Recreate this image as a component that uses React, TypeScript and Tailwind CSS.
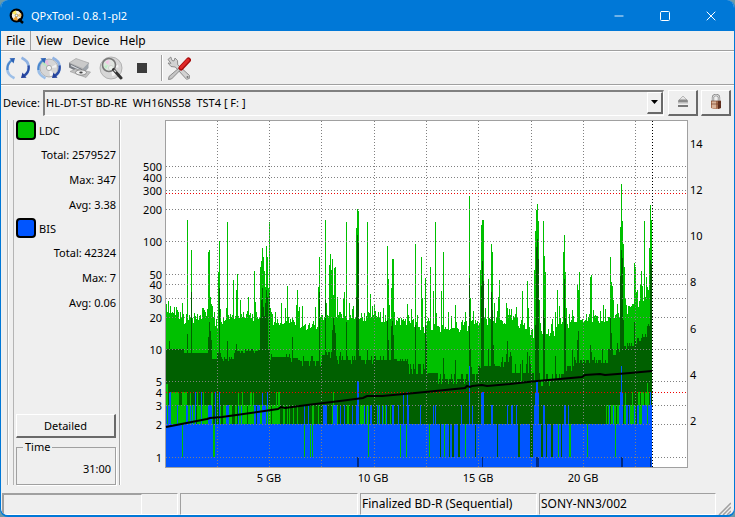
import React, { useState } from 'react';
import { Minus, Square, X } from 'lucide-react';

type Run = [x: number, width: number, top: number, bottom: number];
type Point = [x: number, y: number];

const PLOT = { left: 166, right: 687, top: 121, bottom: 467 };
const END_X = 652;

const LEFT_TICKS: [string, number][] = [
  ['500', 166], ['400', 177], ['300', 190], ['200', 209], ['100', 241], ['50', 274], ['40', 284],
  ['30', 298], ['20', 317], ['10', 349], ['5', 381], ['4', 392], ['3', 405], ['2', 424], ['1', 457],
];
const RIGHT_TICKS: [string, number][] = [['14', 144], ['12', 190], ['10', 236], ['8', 282], ['6', 329], ['4', 375], ['2', 421]];
const BOTTOM_TICKS: [string, number][] = [['5 GB', 269], ['10 GB', 373], ['15 GB', 478], ['20 GB', 583]];
const GRID_X = [217, 269, 321, 374, 426, 478, 531, 583, 635];
const GRID_Y = [166, 177, 190, 209, 241, 274, 284, 298, 317, 349, 381, 405, 424, 457];
const LIMIT_Y = [193, 392];

// single pixel LDC maximum spikes
const MAX_PEAKS: Point[] = [
  [168, 301], [170, 306], [174, 308], [177, 310], [187, 220], [191, 250], [202, 308], [208, 252], [209, 250], [210, 297],
  [211, 304], [218, 272], [219, 241], [227, 222], [233, 280], [236, 290], [237, 274], [240, 300], [248, 297], [254, 271],
  [255, 310], [260, 267], [261, 261], [262, 248], [263, 257], [264, 271], [265, 287], [266, 246], [267, 257], [268, 288],
  [269, 222], [281, 303], [287, 286], [296, 305], [297, 290], [318, 287], [319, 257], [325, 220], [329, 265], [330, 254],
  [331, 270], [332, 259], [333, 295], [334, 268], [335, 267], [344, 292], [346, 222], [352, 309], [356, 228], [357, 209],
  [358, 211], [367, 222], [370, 294], [375, 311], [383, 308], [387, 246], [388, 279], [389, 305], [391, 288], [392, 259],
  [393, 259], [394, 312], [407, 311], [411, 309], [415, 244], [421, 257], [422, 298], [425, 278], [430, 267], [433, 291],
  [435, 222], [441, 291], [443, 252], [448, 312], [455, 305], [462, 320], [469, 196], [470, 298], [473, 311], [480, 270],
  [481, 225], [482, 220], [483, 220], [488, 279], [491, 244], [492, 252], [498, 297], [499, 280], [506, 303], [507, 308],
  [511, 309], [522, 291], [527, 281], [528, 308], [534, 270], [535, 231], [536, 210], [537, 204], [538, 221], [539, 300],
  [543, 221], [544, 256], [545, 272], [555, 312], [557, 290], [563, 252], [564, 235], [565, 272], [566, 308], [572, 310],
  [577, 284], [578, 290], [579, 272], [590, 277], [591, 275], [600, 311], [605, 309], [610, 257], [611, 282], [612, 286],
  [613, 300], [620, 227], [621, 184], [622, 221], [623, 244], [624, 267], [625, 298], [634, 263], [635, 267], [636, 292],
  [637, 290], [640, 285], [641, 271], [642, 286], [644, 221], [646, 277], [647, 287], [648, 290], [649, 248], [650, 205],
  [651, 220],
];
const AVG_PEAKS: Point[] = [
  [169, 341], [187, 334], [191, 292], [208, 337], [209, 322], [210, 331], [211, 340], [219, 288], [227, 341], [236, 344],
  [260, 318], [261, 300], [262, 288], [263, 307], [264, 316], [265, 303], [266, 290], [267, 297], [269, 292], [292, 337],
  [319, 292], [325, 300], [332, 330], [333, 318], [334, 325], [335, 333], [340, 352], [346, 322], [356, 297], [357, 235],
  [358, 243], [367, 349], [387, 320], [388, 340], [391, 326], [392, 321], [393, 335], [415, 325], [425, 325], [426, 340],
  [443, 358], [455, 360], [469, 278], [470, 349], [481, 286], [482, 261], [483, 281], [488, 349], [491, 292], [492, 310],
  [493, 345], [506, 354], [507, 341], [510, 352], [511, 356], [522, 360], [527, 352], [529, 356], [535, 325], [536, 247],
  [537, 239], [538, 259], [543, 310], [544, 318], [555, 356], [564, 279], [565, 318], [572, 350], [577, 340], [578, 331],
  [590, 345], [591, 352], [602, 349], [610, 317], [611, 333], [617, 343], [620, 276], [621, 250], [622, 258], [623, 320],
  [634, 322], [650, 260], [651, 264],
];

// [x from, typical top]
const MAX_BASE: Point[] = [
  [166, 314], [190, 319], [208, 312], [216, 324], [230, 317], [258, 315], [272, 322], [290, 321], [312, 328], [322, 318],
  [336, 315], [356, 317], [376, 315], [396, 321], [408, 319], [422, 330], [428, 323], [446, 332], [466, 325], [480, 322],
  [495, 322], [510, 319], [524, 325], [531, 334], [540, 328], [551, 334], [562, 320], [570, 325], [580, 318], [604, 320],
  [622, 310], [634, 309], [642, 300], [652, 293],
];
// [x from, width, top, jitter]
const AVG_BASE: Run[] = [
  [166, 18, 349, 0], [184, 28, 353, 0], [212, 5, 359, 0], [217, 4, 353, 0], [221, 13, 359, 2], [234, 24, 351, 2],
  [258, 12, 350, 0], [270, 20, 357, 3], [290, 10, 360, 2], [300, 22, 361, 5], [322, 12, 355, 3], [334, 60, 360, 4],
  [394, 14, 361, 2], [408, 20, 369, 5], [428, 10, 373, 0], [438, 28, 379, 5], [466, 12, 374, 7], [478, 22, 366, 2],
  [500, 12, 362, 5], [512, 28, 373, 9], [540, 15, 380, 6], [555, 9, 374, 5], [564, 10, 366, 5], [574, 10, 360, 3],
  [584, 24, 360, 3], [608, 12, 352, 3], [620, 14, 346, 3], [634, 8, 341, 3], [642, 5, 334, 3], [647, 5, 326, 2],
];

const GREEN: Run[] = [
  [166, 2, 384, 424], [168, 45, 405, 424], [171, 8, 392, 424], [182, 5, 392, 424], [190, 1, 392, 424], [197, 1, 392, 424],
  [203, 1, 392, 424], [211, 2, 392, 424], [217, 1, 392, 424], [220, 1, 405, 424], [223, 3, 405, 424], [228, 4, 405, 424],
  [235, 2, 405, 424], [238, 33, 405, 424], [238, 1, 392, 424], [242, 1, 392, 424], [250, 2, 392, 424], [253, 1, 392, 424],
  [272, 7, 405, 424], [276, 1, 392, 424], [278, 2, 392, 424], [283, 2, 405, 424], [287, 1, 405, 424], [289, 1, 405, 424],
  [293, 1, 405, 424], [297, 1, 405, 424], [304, 1, 405, 424], [312, 2, 405, 424], [318, 1, 405, 424], [332, 2, 405, 424],
  [333, 1, 392, 424], [337, 1, 405, 424], [347, 2, 405, 424], [360, 4, 405, 424], [366, 3, 405, 424], [378, 1, 405, 424],
  [383, 1, 405, 424], [385, 1, 405, 424], [390, 1, 405, 424], [606, 1, 405, 424], [608, 1, 405, 424], [611, 2, 405, 424],
  [614, 2, 405, 424], [617, 2, 405, 424], [624, 27, 405, 424], [625, 1, 392, 424], [632, 1, 392, 424], [638, 2, 392, 424],
  [641, 3, 392, 424], [645, 4, 392, 424], [647, 1, 383, 424],
];
const GAPS: Run[] = [
  [196, 1, 405, 424], [247, 1, 405, 424], [256, 1, 405, 424], [628, 1, 405, 424], [636, 1, 405, 424],
];
const BLUE: Run[] = [
  [166, 486, 424, 467], [166, 1, 405, 424], [168, 1, 405, 424], [169, 2, 392, 424], [177, 1, 405, 424], [186, 2, 405, 424],
  [190, 1, 405, 424], [192, 1, 405, 424], [195, 1, 392, 424], [201, 1, 392, 424], [208, 4, 405, 424], [215, 1, 392, 424],
  [219, 1, 392, 424], [226, 2, 405, 424], [228, 1, 405, 424], [238, 1, 405, 424], [241, 1, 405, 424], [254, 2, 405, 424],
  [257, 3, 405, 424], [262, 1, 392, 424], [263, 3, 405, 424], [267, 1, 392, 424], [304, 1, 405, 424], [308, 1, 405, 424],
  [323, 4, 405, 424], [333, 2, 405, 424], [335, 2, 405, 424], [340, 1, 405, 424], [344, 1, 405, 424], [352, 1, 405, 424],
  [356, 1, 405, 424], [357, 2, 381, 424], [364, 1, 405, 424], [367, 1, 405, 424], [370, 2, 405, 424], [377, 1, 405, 424],
  [379, 1, 405, 424], [382, 1, 405, 424], [386, 1, 405, 424], [392, 2, 405, 424], [398, 1, 405, 424], [403, 1, 392, 424],
  [407, 1, 392, 424], [408, 1, 405, 424], [420, 1, 405, 424], [433, 1, 405, 424], [435, 1, 405, 424], [461, 1, 405, 424],
  [469, 1, 366, 424], [472, 1, 405, 424], [481, 3, 392, 424], [491, 2, 405, 424], [507, 1, 405, 424], [511, 2, 405, 424],
  [516, 1, 405, 424], [535, 4, 392, 424], [536, 2, 381, 424], [534, 5, 405, 424], [543, 2, 405, 424], [564, 2, 405, 424],
  [568, 1, 405, 424], [609, 1, 405, 424], [613, 1, 405, 424], [619, 4, 405, 424], [620, 3, 392, 424], [621, 1, 366, 424],
  [626, 2, 405, 424], [629, 1, 405, 424], [634, 1, 405, 424], [637, 2, 405, 424], [642, 5, 405, 424], [648, 4, 405, 424],
  [650, 1, 392, 424],
];
const LOW_GREEN: Run[] = [182, 213, 214, 304, 310, 312, 368, 400, 406, 429, 444, 465, 558, 569, 570, 587, 615].map(
  (x): Run => [x, 1, 424, 457],
);
const LOW_DARK: Run[] = [
  [440, 1, 424, 457], [449, 1, 424, 457], [452, 2, 424, 457], [458, 2, 424, 457], [475, 1, 424, 457], [497, 1, 424, 457],
  [518, 2, 424, 457], [530, 3, 424, 457], [541, 2, 424, 457], [546, 1, 424, 457], [551, 2, 424, 457], [561, 1, 424, 457],
];
const NAVY: Run[] = [[357, 2, 457, 467], [482, 1, 457, 467], [536, 3, 457, 467], [621, 2, 457, 467], [650, 1, 457, 467]];

const SPEED: Point[] = [
  [166, 427], [207, 419], [210, 418], [222, 417], [278, 409], [281, 407], [285, 408], [307, 405], [340, 401], [363, 398],
  [367, 396], [382, 396], [415, 393], [465, 388], [467, 386], [470, 387], [472, 386], [482, 385], [487, 386], [510, 384],
  [537, 381], [582, 377], [585, 375], [600, 374], [605, 375], [630, 373], [652, 371],
];

const noise = (n: number) => {
  const s = Math.sin(n * 12.9898) * 43758.5453;
  return s - Math.floor(s);
};

const toPath = (runs: Run[]) => runs.map(([x, w, top, bottom]) => `M${x} ${top}h${w}V${bottom}h${-w}z`).join('');

const buildColumns = () => {
  const maxPeaks = new Map(MAX_PEAKS);
  const avgPeaks = new Map(AVG_PEAKS);
  const max: Run[] = [];
  const avg: Run[] = [];
  for (let x = PLOT.left; x < END_X; x++) {
    const i = MAX_BASE.findIndex(([bx]) => bx > x);
    const [x0, y0] = MAX_BASE[i - 1];
    const [x1, y1] = MAX_BASE[i];
    const base = y0 + ((y1 - y0) * (x - x0)) / (x1 - x0);
    const spike = noise(x + 900) > 0.85 ? 5 + noise(x + 70) * 11 : 0;
    const top = Math.round(base + 6 - noise(x) * 11 - spike);
    max.push([x, 1, Math.min(top, maxPeaks.get(x) ?? top), 424]);

    const [, , level, jitter] = AVG_BASE.find(([ax, w]) => x >= ax && x < ax + w)!;
    const avgTop = level + (noise(x + 300) > 0.72 ? -jitter : noise(x + 500) > 0.7 ? jitter : 0);
    avg.push([x, 1, Math.min(avgTop, avgPeaks.get(x) ?? avgTop), 424]);
  }
  return { max: toPath(max), avg: toPath(avg) };
};

const columns = buildColumns();

const ScanChart: React.FC = () => (
  <svg viewBox="122 118 612 373" className="block h-auto w-full" role="img" aria-label="LDC and BIS error rate">
    <g shapeRendering="crispEdges">
      <rect x={165} y={120} width={523} height={348} fill="#a0a0a0" />
      <rect x={PLOT.left} y={PLOT.top} width={PLOT.right - PLOT.left} height={PLOT.bottom - PLOT.top} fill="#fff" />
      <path d={columns.max} fill="#00c000" />
      <path d={columns.avg} fill="#006000" />
      <path d={toPath(GREEN)} fill="#00c000" />
      <path d={toPath(GAPS)} fill="#006000" />
      <path d={toPath(BLUE)} fill="#0055ff" />
      <path d={toPath(LOW_GREEN)} fill="#00c000" />
      <path d={toPath(LOW_DARK)} fill="#006000" />
      <path d={toPath(NAVY)} fill="#002a80" />
      {GRID_Y.map((y) => (
        <line key={y} x1={166} x2={687} y1={y + 0.5} y2={y + 0.5} stroke="#808080" strokeDasharray="1 2" />
      ))}
      {GRID_X.map((x) => (
        <line key={x} x1={x + 0.5} x2={x + 0.5} y1={121} y2={467} stroke="#808080" strokeDasharray="1 2" />
      ))}
      {LIMIT_Y.map((y) => (
        <line key={y} x1={166} x2={687} y1={y + 0.5} y2={y + 0.5} stroke="#f00000" strokeDasharray="1 2" />
      ))}
      <line x1={652.5} x2={652.5} y1={121} y2={467} stroke="#000" strokeDasharray="1 2" />
    </g>
    <polyline points={SPEED.map((p) => p.join(',')).join(' ')} fill="none" stroke="#000" strokeWidth={2} />
    <g className="font-['Noto_Sans','Open_Sans',sans-serif] text-[11px]" fill="#000">
      {LEFT_TICKS.map(([label, y]) => (
        <text key={label} x={162} y={y + 5} textAnchor="end">{label}</text>
      ))}
      {RIGHT_TICKS.map(([label, y]) => (
        <text key={label} x={690} y={y + 4}>{label}</text>
      ))}
      {BOTTOM_TICKS.map(([label, x]) => (
        <text key={label} x={x} y={482} textAnchor="middle">{label}</text>
      ))}
    </g>
  </svg>
);

const AppIcon = () => (
  <svg viewBox="0 0 16 16" className="size-4">
    <circle cx="7.5" cy="7.5" r="5.8" fill="#f4efe2" stroke="#000" strokeWidth="2.2" />
    <path d="M7.5 7.5 3 5A5 5 0 0 1 7 2.6z" fill="#ffe95c" />
    <path d="M7.5 7.5 4 11.5a5 5 0 0 0 5 .7z" fill="#f0a030" />
    <path d="M7.5 7.5 12 5a5 5 0 0 1 0 4.5z" fill="#f7c66b" />
    <circle cx="7.5" cy="7.5" r="1.3" fill="#fff" stroke="#775" strokeWidth=".7" />
    <path d="m9.5 11 4.5 4" stroke="#000" strokeWidth="2.4" />
  </svg>
);

const DiscBody = ({ r }: { r: number }) => (
  <>
    <circle cx="12" cy="12" r={r} fill="#d6d6d6" stroke="#a5a5a5" strokeWidth=".8" />
    <path d="M12 12 7 5.5A8 8 0 0 1 11 4z" fill="#e8b9df" />
    <path d="M12 12 5 8a8 8 0 0 1 2-2.5z" fill="#b9e8bd" />
    <path d="m12 12 5 6.5a8 8 0 0 1-4 1.5z" fill="#f4f4f4" />
    <path d="m12 12 7-3.5a8 8 0 0 1 .5 3z" fill="#f2f2f2" />
    <circle cx="12" cy="12" r="2.6" fill="#f5f5f5" stroke="#999" strokeWidth=".8" />
  </>
);

const Arrows = () => (
  <>
    <path d="M8.5 22.3C3.5 20 1 16.5 1.3 12c.2-3.6 2-6.2 4.7-8" fill="none" stroke="#9cbfe8" strokeWidth="2.6" />
    <path d="M1.5 14C1 10 3 6.5 6 4.3" fill="none" stroke="#4a86cc" strokeWidth="2" />
    <path d="M3.5 2.2 9 2 7.5 7.5z" fill="#2c62b5" />
    <path d="M15.5 1.7C20.5 4 23 7.5 22.7 12c-.2 3.6-2 6.2-4.7 8" fill="none" stroke="#8fb2e2" strokeWidth="2.6" />
    <path d="M22.5 9.5c.8 4-1.2 7.9-4.2 10.2" fill="none" stroke="#2b4ca5" strokeWidth="2.2" />
    <path d="m20.5 21.8-5.5.2 1.5-5.5z" fill="#23409a" />
  </>
);

const RefreshIcon = () => <svg viewBox="0 0 24 24" className="size-6"><Arrows /></svg>;
const DiscRefreshIcon = () => <svg viewBox="0 0 24 24" className="size-6"><DiscBody r={9} /><Arrows /></svg>;
const DriveIcon = () => (
  <svg viewBox="0 0 24 24" className="size-6">
    <path d="M1 7 8 2.5l13 4.5-5 6z" fill="#cacaca" stroke="#999" strokeWidth=".6" />
    <path d="m1 7 13.5 6v5.5L1 11.5z" fill="#777b82" />
    <path d="m14.5 13 6-6v5l-6 6.5z" fill="#9da3aa" />
    <path d="m3 9.5 10 4.8" stroke="#d9dde2" strokeWidth="1.2" />
    <path d="m2 15.5 5.5-2.5 15 3-4.5 5.5z" fill="#c0c0c0" stroke="#989898" strokeWidth=".6" />
    <ellipse cx="13" cy="16.5" rx="5.5" ry="2.6" fill="#eee" stroke="#777" strokeWidth=".7" />
    <ellipse cx="13" cy="16.5" rx="1.7" ry=".9" fill="#444" />
  </svg>
);
const ScanIcon = () => (
  <svg viewBox="0 0 24 24" className="size-6">
    <DiscBody r={11} />
    <circle cx="10" cy="9" r="6.5" fill="#e7eee7" fillOpacity=".65" stroke="#777" strokeWidth="1.6" />
    <path d="m6 6 4-2-1 5z" fill="#f4c6e6" />
    <path d="m5 10 4-1-2 4z" fill="#bdeec6" />
    <path d="m14.5 13.5 7.5 8.5" stroke="#333" strokeWidth="3" strokeLinecap="round" />
    <path d="m15 14 2 2" stroke="#ccc" strokeWidth="1.2" />
  </svg>
);
const StopIcon = () => <svg viewBox="0 0 24 24" className="size-6"><path d="M7 7h10v10H7z" fill="#3c3c3c" /></svg>;
const ToolsIcon = () => (
  <svg viewBox="0 0 24 24" className="size-6">
    <path d="M1 3.500 3.800 1 5 4.500l2 .5 1-3 2.500 2.500.2 4.200L22.500 19.500l-.2 3-2.800.8L8.300 11 4 10.500 1 7l3 .3z" fill="#d2d2d2" stroke="#858585" strokeWidth=".9" />
    <circle cx="20.5" cy="21" r="1" fill="#777" />
    <path d="m12.5 11.5 1.7 1.7L4.5 23l-3 .5.5-3z" fill="#c5c5c5" stroke="#777" strokeWidth=".8" />
    <path d="m14 12 7.500-8" stroke="#a50c0c" strokeWidth="5" strokeLinecap="round" />
    <path d="m14 11.500 7-7.500" stroke="#e02a2a" strokeWidth="3" strokeLinecap="round" />
  </svg>
);
const EjectIcon = () => (
  <svg viewBox="0 0 16 16" className="size-4">
    <path d="m8 2 5 5H3z" fill="#e5e5e5" stroke="#aaa" strokeWidth=".8" />
    <path d="M4 5.5h8L13 8H3z" fill="#8b8b8b" />
    <path d="M3 8h10v1.5H3z" fill="#bbb" />
    <path d="M3 11h10v2H3z" fill="#777" />
  </svg>
);
const LockIcon = () => (
  <svg viewBox="0 0 16 16" className="size-4">
    <path d="M5 8V3.5Q5 1 8 1t3 2.5V8" fill="none" stroke="#888" strokeWidth="2.4" />
    <path d="M5 8V3.5Q5 1 8 1t3 2.5V8" fill="none" stroke="#e0e0e0" strokeWidth="1" />
    <path d="M3 7h10v7q-5 2-10 0z" fill="#a86f50" />
    <path d="M4 7h4v7.5L4 14z" fill="#d9b298" />
    <path d="M10 7h3v7l-3 1z" fill="#5c2c1c" />
    <path d="M3 7h10M3 10h10" stroke="#744029" strokeWidth=".7" />
  </svg>
);

const TOOLS = [
  { label: 'Rescan bus', Icon: RefreshIcon },
  { label: 'Refresh media info', Icon: DiscRefreshIcon },
  { label: 'Device controls', Icon: DriveIcon },
  { label: 'Scan', Icon: ScanIcon },
  { label: 'Stop', Icon: StopIcon },
];

const STATS = [
  { name: 'LDC', swatch: 'bg-[#00c000]', total: '2579527', max: '347', avg: '3.38' },
  { name: 'BIS', swatch: 'bg-[#0055ff]', total: '42324', max: '7', avg: '0.06' },
];

const raised = 'border-r-2 border-b-2 border-t border-l border-t-white border-l-white border-r-[#696969] border-b-[#696969] bg-[#efefef]';
const sunken = 'border border-t-[#a0a0a0] border-l-[#a0a0a0] border-r-white border-b-white';

const App: React.FC = () => {
  const [device, setDevice] = useState('hl');

  return (
    <div className="bg-[#6b9aa8]">
      <div className="flex flex-col overflow-hidden rounded-lg border-x border-b-2 border-[#0078d7] bg-[#efefef] font-['Noto_Sans','Open_Sans',sans-serif] text-[11px] leading-4 text-black">
        <header className="flex h-[31px] items-center bg-[#0078d7] pl-2 text-white">
          <AppIcon />
          <h1 className="ml-1.5 flex-1">QPxTool - 0.8.1-pl2</h1>
          <button aria-label="Minimize" className="grid h-full w-[46px] place-items-center"><Minus className="size-3.5" strokeWidth={1.5} /></button>
          <button aria-label="Maximize" className="grid h-full w-[46px] place-items-center"><Square className="size-3" strokeWidth={2} /></button>
          <button aria-label="Close" className="grid h-full w-[46px] place-items-center"><X className="size-4" strokeWidth={1.5} /></button>
        </header>

        <nav className="flex h-5 border-b border-[#a0a0a0] text-xs leading-5">
          <button className="border-r border-[#a0a0a0] px-[5px]">File</button>
          <button className="px-[5px]">View</button>
          <button className="px-[5px]">Device</button>
          <button className="px-[5px]">Help</button>
        </nav>

        <div className="flex h-[34px] items-center border-t border-b border-t-white border-b-[#a0a0a0] pl-[5px]">
          <div className="flex gap-[7px]">
            {TOOLS.map(({ label, Icon }) => (
              <button key={label} aria-label={label}><Icon /></button>
            ))}
          </div>
          <div className="mr-1 ml-[7px] h-[26px] w-0.5 border-r border-l border-l-[#a0a0a0] border-r-white" />
          <button aria-label="Preferences"><ToolsIcon /></button>
        </div>

        <div className="flex h-[33px] items-center gap-1 border-t border-white pt-px pr-[3px] pl-0.5">
          <label htmlFor="device" className="w-9">Device:</label>
          <div className="relative flex-1">
            <select
              id="device"
              value={device}
              onChange={(e) => setDevice(e.target.value)}
              className="block h-[26px] w-full appearance-none border-t-2 border-r border-b border-l-2 border-t-[#808080] border-r-white border-b-white border-l-[#808080] bg-[#efefef] pl-px font-['Noto_Sans','Open_Sans',sans-serif] text-[11px]"
            >
              <option value="hl">HL-DT-ST BD-RE{'\u00a0\u00a0'}WH16NS58{'\u00a0\u00a0'}TST4 [ F: ]</option>
            </select>
            <span className={`pointer-events-none absolute top-0.5 right-px bottom-0.5 grid w-4 place-items-center ${raised}`}>
              <svg viewBox="0 0 7 4" className="h-1 w-[7px]"><path d="M0 0h7L3.5 4z" /></svg>
            </span>
          </div>
          <div className="flex gap-[3px]">
            <button aria-label="Eject" className={`grid h-[26px] w-[30px] place-items-center ${raised}`}><EjectIcon /></button>
            <button aria-label="Lock" className={`grid h-[26px] w-[30px] place-items-center ${raised}`}><LockIcon /></button>
          </div>
        </div>

        <main className="flex">
          <aside className="flex w-[121px] shrink-0 pt-[2px] pb-1.5 pl-1.5">
            <div className="mr-0.5 w-[7px] border-r border-l border-[#b4b4b4] shadow-[inset_1px_0_white]" />
            <div className="flex w-[100px] flex-col">
              {STATS.map(({ name, swatch, total, max, avg }) => (
                <section key={name}>
                  <h2 className="flex h-[23px] items-start gap-[3px]">
                    <span className={`size-5 rounded-sm border-2 border-black ${swatch}`} />
                    <span className="pt-[3px]">{name}</span>
                  </h2>
                  <p className="h-[25px] text-right leading-6">Total: {total}</p>
                  <p className="h-[25px] text-right leading-6">Max: {max}</p>
                  <p className="h-[25px] text-right leading-6">Avg: {avg}</p>
                </section>
              ))}
              <button className={`mt-auto h-6 ${raised}`}>Detailed</button>
              <fieldset className="mt-[3px] border border-[#a0a0a0] px-1 pb-1 shadow-[1px_1px_white]">
                <legend className="ml-0.5 px-0.5 leading-3">Time</legend>
                <p className="h-[27px] text-right leading-8">31:00</p>
              </fieldset>
            </div>
            <div className="ml-[3px] w-0.5 border-r border-l border-l-[#a0a0a0] border-r-white" />
          </aside>
          <div className="min-w-0 flex-1">
            <ScanChart />
          </div>
        </main>

        <footer className="flex gap-0.5 pt-0.5 pr-[3px] pl-px text-xs">
          <div className={`h-[22px] w-[176px] ${sunken}`}>
            <div className="h-full w-[139px] border-t border-r border-l border-t-[#a0a0a0] border-r-white border-l-[#a0a0a0]" />
          </div>
          <div className={`h-[22px] w-[178px] ${sunken}`} />
          <div className={`h-[22px] w-[177px] pl-px leading-5 ${sunken}`}>Finalized BD-R (Sequential)</div>
          <div className={`h-[22px] w-[177px] pl-px leading-5 ${sunken}`}>SONY-NN3/002</div>
          <svg viewBox="0 0 13 13" className="ml-auto size-[13px] self-end" fill="none" stroke="#a0a0a0" strokeWidth="1.5">
            <path d="M1 13 13 1M5 13l8-8M9 13l4-4" />
          </svg>
        </footer>
      </div>
    </div>
  );
};

export default App;
